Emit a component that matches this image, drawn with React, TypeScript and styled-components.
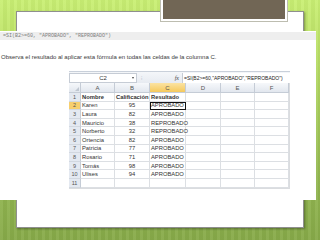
import React from "react";
import styled, { createGlobalStyle } from "styled-components";

const GlobalStyle = createGlobalStyle`
  html, body { margin: 0; padding: 0; }
  body { width: 320px; height: 240px; overflow: hidden; }
`;

const Slide = styled.div`
  position: relative;
  width: 320px;
  height: 240px;
  box-sizing: border-box;
  padding-top: 11px;
  overflow: hidden;
  background:
    repeating-linear-gradient(90deg, rgba(255,255,255,0.05) 0 3px, rgba(0,0,0,0.03) 3px 7px),
    linear-gradient(180deg, #c9ef74 0%, #c0e56b 14%, #a8cd5c 45%, #90b44f 80%, #87aa49 100%);
`;

const TitleBox = styled.div`
  position: absolute;
  left: 161px;
  top: -3px;
  width: 122px;
  height: 20px;
  background: #716655;
  border: 2px solid #ffffff;
  box-shadow: 0 0 0 1px #bdbdb0;
`;

const Panel = styled.div`
  margin: 0 16px;
  height: 217px;
  box-sizing: border-box;
  background: #ffffff;
  border: 1px solid #8f8f8f;
  box-shadow: 1px 1px 2px rgba(0, 0, 0, 0.35);
  padding-top: 19px;
`;

const Picture = styled.div`
  margin-left: -17px;
  width: 316px;
  height: 169px;
  background: #ffffff;
  display: flex;
  flex-direction: column;
`;

const FormulaStrip = styled.div`
  margin-top: 1px;
  height: 8px;
  background: #eeeeee;
  padding-left: 3px;
  font-family: "Liberation Mono", monospace;
  font-size: 5px;
  line-height: 8px;
  color: #808080;
  white-space: pre;
`;

const Sentence = styled.div`
  margin-top: 13px;
  padding-left: 1px;
  font-family: "Liberation Sans", Arial, sans-serif;
  font-size: 6px;
  line-height: 8px;
  color: #3a3a3a;
  white-space: nowrap;
`;

const Sheet = styled.div`
  margin-top: 10px;
  margin-left: 69px;
  width: 221px;
  font-family: "Liberation Sans", Arial, sans-serif;
  font-size: 6px;
  color: #333;
`;

const FormulaBar = styled.div`
  display: flex;
  align-items: center;
  height: 12px;
  background: linear-gradient(180deg, #f4f6f9, #e7ebf1);
  border-top: 1px solid #c9d0da;
  box-sizing: border-box;
`;

const NameBox = styled.div`
  position: relative;
  flex: 0 0 68px;
  height: 10px;
  box-sizing: border-box;
  background: #fff;
  border: 1px solid #c6ccd5;
  display: flex;
  align-items: center;
  justify-content: center;
  font-size: 6px;
  color: #333;
`;

const Arrow = styled.span`
  position: absolute;
  right: 2px;
  top: 3px;
  width: 0;
  height: 0;
  border-left: 1.5px solid transparent;
  border-right: 1.5px solid transparent;
  border-top: 2px solid #444;
`;

const Dots = styled.div`
  flex: 0 0 8px;
  height: 10px;
  display: flex;
  align-items: center;
  justify-content: center;
  color: #aab;
  font-size: 5px;
`;

const Fx = styled.div`
  flex: 0 0 37px;
  text-align: right;
  padding-right: 3px;
  box-sizing: border-box;
  font-family: "Liberation Serif", serif;
  font-style: italic;
  font-size: 6px;
  color: #444;
`;

const FormulaInput = styled.div`
  flex: 1 1 auto;
  min-width: 0;
  height: 10px;
  box-sizing: border-box;
  background: #fff;
  border-left: 1px solid #c6ccd5;
  padding-left: 1px;
  font-size: 5px;
  line-height: 10px;
  color: #222;
  white-space: nowrap;
`;

const Grid = styled.div`
  display: grid;
  grid-template-columns: 12px 34px 35px 36px 35px 34px 34px;
  grid-template-rows: 10px repeat(11, 8.6px);
  border-bottom: 1px solid #dadcdf;
  border-right: 1px solid #dadcdf;
`;

const ColHead = styled.div<{ $active?: boolean }>`
  display: flex;
  align-items: center;
  justify-content: center;
  background: ${(p) =>
    p.$active
      ? "linear-gradient(180deg, #fbe3a2, #f5c95c)"
      : "linear-gradient(180deg, #f6f8fb, #e2e7ee)"};
  border-right: 1px solid #c5ccd6;
  border-bottom: 1px solid #c5ccd6;
  color: #555;
  font-size: 6px;
  position: relative;
`;

const Corner = styled.span`
  position: absolute;
  right: 1px;
  bottom: 1px;
  width: 0;
  height: 0;
  border-left: 4px solid transparent;
  border-bottom: 4px solid #c0c7d1;
`;

const RowHead = styled.div<{ $active?: boolean }>`
  display: flex;
  align-items: center;
  justify-content: center;
  background: ${(p) => (p.$active ? "#f7cf6e" : "#e4e9f1")};
  border-right: 1px solid #c5ccd6;
  border-bottom: 1px solid #d2d8e0;
  color: #555;
  font-size: 5.5px;
`;

const Cell = styled.div<{ $bold?: boolean; $align?: string; $selected?: boolean }>`
  display: flex;
  align-items: center;
  justify-content: ${(p) => p.$align || "flex-start"};
  padding: 0 1px;
  border-right: 1px solid #dcdfe3;
  border-bottom: 1px solid #dcdfe3;
  font-weight: ${(p) => (p.$bold ? 700 : 400)};
  font-size: 5.8px;
  color: #333;
  white-space: nowrap;
  overflow: visible;
  box-sizing: border-box;
  ${(p) => (p.$selected ? "outline: 1.5px solid #111; outline-offset: -1px; z-index: 1;" : "")}
`;

const data: [string, string, string][] = [
  ["Karen", "95", "APROBADO"],
  ["Laura", "82", "APROBADO"],
  ["Mauricio", "38", "REPROBADO"],
  ["Norberto", "32", "REPROBADO"],
  ["Ortencia", "82", "APROBADO"],
  ["Patricia", "77", "APROBADO"],
  ["Rosario", "71", "APROBADO"],
  ["Tomás", "98", "APROBADO"],
  ["Ulises", "94", "APROBADO"],
];

export default function App() {
  const rows: React.ReactNode[] = [];
  rows.push(
    <React.Fragment key="r1">
      <RowHead>1</RowHead>
      <Cell $bold>Nombre</Cell>
      <Cell $bold>Calificación</Cell>
      <Cell $bold>Resultado</Cell>
      <Cell />
      <Cell />
      <Cell />
    </React.Fragment>
  );
  data.forEach((d, i) => {
    const n = i + 2;
    rows.push(
      <React.Fragment key={n}>
        <RowHead $active={n === 2}>{n}</RowHead>
        <Cell>{d[0]}</Cell>
        <Cell $align="center">{d[1]}</Cell>
        <Cell $selected={n === 2}>{d[2]}</Cell>
        <Cell />
        <Cell />
        <Cell />
      </React.Fragment>
    );
  });
  rows.push(
    <React.Fragment key="r11">
      <RowHead>11</RowHead>
      <Cell />
      <Cell />
      <Cell />
      <Cell />
      <Cell />
      <Cell />
    </React.Fragment>
  );

  return (
    <>
      <GlobalStyle />
      <Slide>
        <TitleBox />
        <Panel>
          <Picture>
            <FormulaStrip>=SI(B2&gt;=60, "APROBADO", "REPROBADO")</FormulaStrip>
            <Sentence>
              Observa el resultado al aplicar esta fórmula en todas las celdas de la columna C.
            </Sentence>
            <Sheet>
              <FormulaBar>
                <NameBox>
                  C2
                  <Arrow />
                </NameBox>
                <Dots>⁝</Dots>
                <Fx>fx</Fx>
                <FormulaInput>=SI(B2&gt;=60,"APROBADO","REPROBADO")</FormulaInput>
              </FormulaBar>
              <Grid>
                <ColHead>
                  <Corner />
                </ColHead>
                <ColHead>A</ColHead>
                <ColHead>B</ColHead>
                <ColHead $active>C</ColHead>
                <ColHead>D</ColHead>
                <ColHead>E</ColHead>
                <ColHead>F</ColHead>
                {rows}
              </Grid>
            </Sheet>
          </Picture>
        </Panel>
      </Slide>
    </>
  );
}
